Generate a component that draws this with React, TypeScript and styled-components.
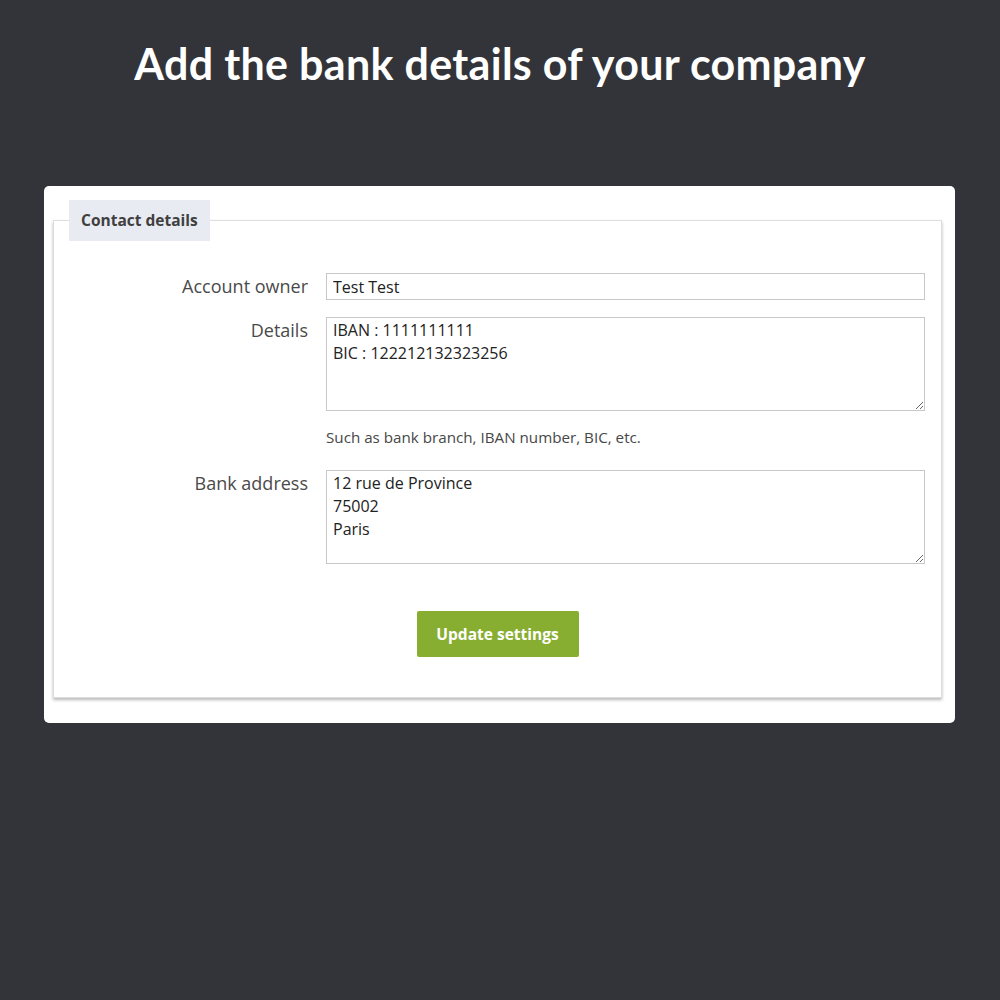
import * as React from 'react';
import styled, { createGlobalStyle } from 'styled-components';

const GlobalStyle = createGlobalStyle`
  html, body {
    margin: 0;
    padding: 0;
    background: #333439;
  }
`;

const Page = styled.div`
  width: 1000px;
  height: 1000px;
  background: #333439;
  padding-top: 39px;
  box-sizing: border-box;
`;

const Title = styled.h1`
  margin: 0;
  text-align: center;
  color: #ffffff;
  font-family: Lato, 'Open Sans', sans-serif;
  font-weight: 700;
  font-size: 43px;
  line-height: 50px;
  letter-spacing: 0.3px;
`;

const Card = styled.div`
  margin: 97px 0 0 44px;
  width: 911px;
  box-sizing: border-box;
  background: #ffffff;
  border-radius: 5px;
  padding: 14px 13px 25px 9px;
`;

const Fieldset = styled.fieldset`
  margin: 0;
  padding: 0 16px 40px 0;
  border: 1px solid #dedede;
  box-shadow: 0 2px 3px rgba(0, 0, 0, 0.28);
  font-family: 'Open Sans', sans-serif;
`;

const Legend = styled.legend`
  margin-left: 15px;
  padding: 0 12px;
  height: 41px;
  line-height: 41px;
  background: #e9ebf3;
  color: #3f3f3f;
  font-size: 15.5px;
  font-weight: 700;
`;

const Form = styled.div`
  display: flex;
  flex-direction: column;
  padding-top: 32px;
`;

const Row = styled.div<{ $gap?: number }>`
  display: grid;
  grid-template-columns: 254px 1fr;
  column-gap: 18px;
  margin-bottom: ${(p) => p.$gap ?? 17}px;
`;

const Label = styled.label<{ $top?: number }>`
  text-align: right;
  color: #4a4a4a;
  font-size: 18px;
  line-height: 27px;
  padding-top: ${(p) => p.$top ?? 0}px;
`;

const TextInput = styled.input`
  height: 27px;
  box-sizing: border-box;
  border: 1px solid #c8c8c8;
  padding: 0 6px;
  font-family: 'Open Sans', sans-serif;
  font-size: 16px;
  color: #222;
  outline: none;
`;

const TextArea = styled.textarea`
  height: 94px;
  box-sizing: border-box;
  border: 1px solid #c8c8c8;
  padding: 1px 6px 0;
  font-family: 'Open Sans', sans-serif;
  font-size: 16px;
  line-height: 23px;
  color: #222;
  resize: vertical;
  outline: none;
`;

const Help = styled.div`
  grid-column: 2;
  color: #474747;
  font-size: 15.2px;
  line-height: 20px;
  margin-top: 1px;
`;

const Actions = styled.div`
  display: flex;
  justify-content: center;
  padding-left: 16px;
  margin-top: 47px;
`;

const Button = styled.button`
  width: 162px;
  height: 46px;
  border: none;
  border-radius: 2px;
  background: #87ae31;
  color: #ffffff;
  font-family: 'Open Sans', sans-serif;
  font-weight: 700;
  font-size: 15.5px;
  cursor: pointer;
`;

export default function App() {
  return (
    <Page>
      <GlobalStyle />
      <Title>Add the bank details of your company</Title>
      <Card>
        <Fieldset>
          <Legend>Contact details</Legend>
          <Form>
            <Row>
              <Label>Account owner</Label>
              <TextInput defaultValue="Test Test" />
            </Row>
            <Row $gap={15}>
              <Label $top={-2}>Details</Label>
              <TextArea defaultValue={'IBAN : 1111111111\nBIC : 122212132323256'} />
            </Row>
            <Row $gap={23}>
              <Help>Such as bank branch, IBAN number, BIC, etc.</Help>
            </Row>
            <Row $gap={0}>
              <Label $top={-2}>Bank address</Label>
              <TextArea defaultValue={'12 rue de Province\n75002\nParis'} />
            </Row>
            <Actions>
              <Button>Update settings</Button>
            </Actions>
          </Form>
        </Fieldset>
      </Card>
    </Page>
  );
}
